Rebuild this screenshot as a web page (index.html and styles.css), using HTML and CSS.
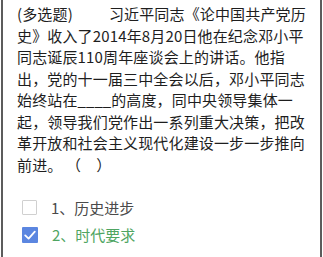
FILE: index.html
```html
<!DOCTYPE html>
<html lang="zh-CN">
<head>
<meta charset="utf-8">
<link rel="stylesheet" href="styles.css">
</head>
<body>
<div class="page">
  <p class="question"><span class="tag">(多选题)</span>习近平同志《论中国共产党历史》收入了2014年8月20日他在纪念邓小平同志诞辰110周年座谈会上的讲话。他指出，党的十一届三中全会以后，邓小平同志始终站在<span class="blank">____</span>的高度，同中央领导集体一起，领导我们党作出一系列重大决策，把改革开放和社会主义现代化建设一步一步推向前进。 （　）</p>
  <ul class="options">
    <li class="option"><span class="box"></span><span class="label">1、历史进步</span></li>
    <li class="option checked"><span class="box"><svg viewBox="0 0 16 16" width="16" height="16"><path d="M3.2 8.4 L6.6 11.6 L12.8 4.6" fill="none" stroke="#fff" stroke-width="1.8" stroke-linecap="round" stroke-linejoin="round"/></svg></span><span class="label">2、时代要求</span></li>
  </ul>
</div>
</body>
</html>
```
FILE: styles.css
```css
html, body {
  margin: 0;
  padding: 0;
  background: #fff;
}
.page {
  margin: 0 1px;
  height: 257px;
  box-sizing: border-box;
  border-left: 2px solid #5c5c5c;
  border-right: 2px solid #5c5c5c;
  padding: 3px 13px 0 14px;
  font-family: "Noto Sans CJK SC", "Noto Sans", sans-serif;
}
.question {
  margin: 0;
  font-size: 15px;
  letter-spacing: 0.15px;
  line-height: 21.5px;
  color: #1e1e1e;
}
.tag {
  margin-right: 36px;
}
.blank {
  letter-spacing: 0;
}
.options {
  list-style: none;
  margin: 19px 0 0;
  padding: 0;
}
.option {
  display: flex;
  align-items: center;
  height: 27px;
  font-size: 15px;
  color: #4a4a4a;
}
.box {
  width: 15px;
  height: 15px;
  box-sizing: border-box;
  margin-left: 5px;
  margin-right: 14px;
  border: 1px solid #d0d0d0;
  border-radius: 1px;
  display: flex;
  align-items: center;
  justify-content: center;
}
.checked .box {
  width: 16px;
  height: 16px;
  border: none;
  background: #5b86e0;
}
.checked .box svg {
  display: block;
}
.checked .label {
  color: #4fa562;
}
```
